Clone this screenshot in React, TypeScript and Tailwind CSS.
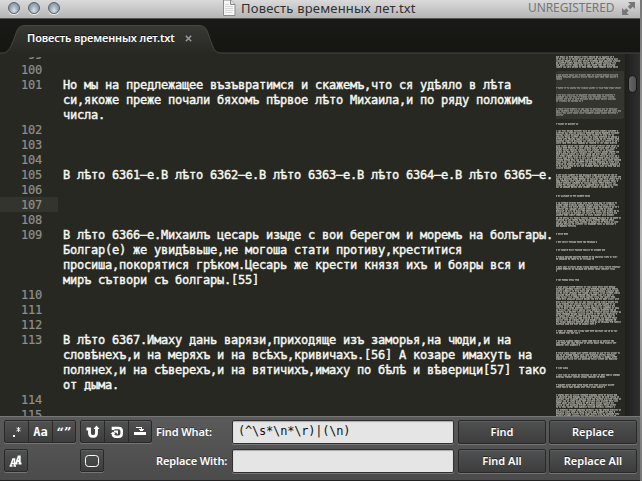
import React from "react";

type Line = { n: number; rows: string[] };

const lines: Line[] = [
  { n: 99, rows: [""] },
  { n: 100, rows: [""] },
  {
    n: 101,
    rows: [
      "Но мы на предлежащее възъвратимся и скажемъ,что ся удѣяло в лѣта",
      "си,якоже преже почали бяхомъ пѣрвое лѣто Михаила,и по ряду положимъ",
      "числа.",
    ],
  },
  { n: 102, rows: [""] },
  { n: 103, rows: [""] },
  { n: 104, rows: [""] },
  { n: 105, rows: ["В лѣто 6361–е.В лѣто 6362–е.В лѣто 6363–е.В лѣто 6364–е.В лѣто 6365–е."] },
  { n: 106, rows: [""] },
  { n: 107, rows: [""] },
  { n: 108, rows: [""] },
  {
    n: 109,
    rows: [
      "В лѣто 6366–е.Михаилъ цесарь изыде с вои берегом и моремъ на болъгары.",
      "Болгар(е) же увидѣвьше,не могоша стати противу,креститися",
      "просиша,покорятися грѣком.Цесарь же крести князя ихъ и бояры вся и",
      "миръ сътвори съ болгары.[55]",
    ],
  },
  { n: 110, rows: [""] },
  { n: 111, rows: [""] },
  { n: 112, rows: [""] },
  {
    n: 113,
    rows: [
      "В лѣто 6367.Имаху дань варязи,приходяще изъ заморья,на чюди,и на",
      "словѣнехъ,и на меряхъ и на всѣхъ,кривичахъ.[56] А козаре имахуть на",
      "полянех,и на сѣверехъ,и на вятичихъ,имаху по бѣлѣ и вѣверици[57] тако",
      "от дыма.",
    ],
  },
  { n: 114, rows: [""] },
  { n: 115, rows: [""] },
];

// Minimap paragraphs: top offset, row count, width of the last row
const blocks: [number, number, number][] = [
  [2, 6, 62], [20, 3, 6], [33, 1, 65], [40, 4, 27], [54, 4, 8], [69, 1, 23],
  [76, 19, 15], [120, 7, 58], [141, 1, 34], [148, 12, 20], [179, 1, 12],
  [187, 1, 41], [195, 1, 49], [202, 2, 38], [212, 3, 1], [225, 1, 23],
  [232, 19, 40], [276, 2, 24], [286, 3, 24], [298, 4, 62], [313, 1, 12],
  [320, 2, 49], [330, 2, 49], [340, 11, 60],
];

function Minimap() {
  let seed = 17;
  const rnd = () => {
    seed = (seed * 16807) % 2147483647;
    return seed / 2147483647;
  };
  const marks: React.ReactNode[] = [];
  blocks.forEach(([top, count, last], b) => {
    for (let i = 0; i < count; i++) {
      const y = top + Math.round(i * 2.08);
      const inView = y > 18 && y < 66;
      const width = i === count - 1 ? last : 58 + Math.floor(rnd() * 8);
      let gap = i === 0 && b > 0 ? 1 : -1;
      for (let x = 0; x < width; x++) {
        if (x === gap) {
          gap = x + 3 + Math.floor(rnd() * 7);
          marks.push(<rect key={`${b}-${i}-${x}`} x={x} y={y} width={1} height={1} opacity={0.25} />);
          continue;
        }
        if (gap < x) gap = x + 2 + Math.floor(rnd() * 7);
        const upper = 0.5 + rnd() * 0.35;
        const lower = 0.4 + rnd() * 0.35;
        const k = inView ? 0.75 : 1;
        marks.push(
          <rect key={`${b}-${i}-${x}`} x={x} y={y} width={1} height={1} opacity={upper * k} />,
          <rect key={`${b}-${i}-${x}b`} x={x} y={y + 1} width={1} height={1} opacity={lower * k} />,
        );
      }
    }
  });
  return (
    <svg width="69" height="362" className="block shrink-0" shapeRendering="crispEdges">
      <rect x="0" y="17" width="68" height="48" rx="2" fill="#34352f" />
      <g fill="#b0b0a8">{marks}</g>
    </svg>
  );
}

const raised =
  "border border-[#292929] bg-linear-to-b from-[#505152] to-[#3d3d3d] shadow-[0_1px_0_#747474,inset_0_1px_0_#5c5d5e]";

function Tool({ children }: { children: React.ReactNode }) {
  return (
    <span className="flex h-full w-6 items-center justify-center border-r border-[#292929] last:w-[22px] last:border-r-0">
      {children}
    </span>
  );
}

function ToolGroup({ children }: { children: React.ReactNode }) {
  return <div className={`flex h-[23px] w-fit rounded-[2px] ${raised}`}>{children}</div>;
}

function PushButton({ children }: { children: React.ReactNode }) {
  return (
    <button
      className={`h-6 w-[88px] rounded-[2px] text-center text-[11px] font-semibold text-white [text-shadow:0_-1px_0_#222] ${raised}`}
    >
      {children}
    </button>
  );
}

function Field({ value }: { value: string }) {
  return (
    <input
      readOnly
      value={value}
      className="h-6 w-[222px] rounded-[2px] border border-[#303030] bg-[#e5e5e5] px-[5px] pb-[3px] font-['DejaVu_Sans_Mono',monospace] text-[12px] tracking-[-0.2px] text-[#111] shadow-[0_1px_0_#777,inset_0_1px_1px_#aaa] outline-none"
    />
  );
}

function Light() {
  return (
    <span className="size-3 rounded-full border border-[#59636c] bg-radial-[at_50%_75%] from-[#d5e3ec] via-[#9eacb7] to-[#6f7d88] shadow-[0_1px_0_#eee]" />
  );
}

export default function App() {
  return (
    <div className="flex h-[481px] w-[642px] overflow-hidden bg-[#a6a6a6] font-['Noto_Sans','Open_Sans',sans-serif]">
      <div className="flex w-[640px] shrink-0 flex-col bg-[#272822]">
        <header className="flex h-[19px] shrink-0 items-center border-b border-[#555] bg-linear-to-b from-[#dadada] to-[#b5b5b5] pb-[3px]">
          <div className="flex w-[223px] shrink-0 gap-2 pl-2">
            <Light />
            <Light />
            <Light />
          </div>
          <svg width="13" height="16" viewBox="0 0 13 16" className="shrink-0">
            <path d="M.5 0V15.5H12V4.5L7.5 0Z" fill="#f7f7f7" stroke="#8a8a8a" />
            <path d="M7.5 0V4.5H12" fill="#ddd" stroke="#888" />
            <path d="M2 4.5H6M2 6.5H10M2 8.5H10M2 10.5H10M2 12.5H9" stroke="#d6d6d6" />
          </svg>
          <h1 className="w-[292px] shrink-0 pl-[5px] text-[13px] leading-4 tracking-[0.19px] whitespace-nowrap text-[#303030]">
            Повесть временных лет.txt
          </h1>
          <span className="w-[93px] shrink-0 text-[12px] leading-4 tracking-[-0.1px] text-[#767676]">UNREGISTERED</span>
          <svg width="15" height="15" viewBox="0 0 15 15" className="mt-[2px] shrink-0" fill="#777">
            <path d="M7 1H14V8L11.8 5.8L9.300 8.200L6.800 5.700L9.300 3.200Z" />
            <path d="M8 14H1V7L3.200 9.200L5.200 7.300L7.700 9.800L5.700 11.800Z" />
          </svg>
        </header>

        <nav className="grid h-[35px] shrink-0 bg-linear-to-b from-[#191a16] to-[#151612]">
          <svg width="640" height="35" className="col-start-1 row-start-1">
            <defs>
              <linearGradient id="tabFill" x1="0" y1="0" x2="0" y2="1">
                <stop offset="0" stopColor="#383934" />
                <stop offset="1" stopColor="#272822" />
              </linearGradient>
            </defs>
            <path
              d="M0 34H2C9 34 11 27 14 20C17 12 17 6.500 25 6.500H199C207 6.500 207 12 210 20C213 28 214 34 221 34H640V35H0Z"
              fill="url(#tabFill)"
            />
            <path
              d="M0 34H2C9 34 11 27 14 20C17 12 17 6.500 25 6.500H199C207 6.500 207 12 210 20C213 28 214 34 221 34H640"
              fill="none"
              stroke="#464740"
            />
          </svg>
          <div className="col-start-1 row-start-1 flex items-center gap-[10px] pt-[4px] pl-[27px] text-[11px] font-semibold text-white [text-shadow:0_-1px_0_#111]">
            <span className="tracking-[-0.12px] whitespace-nowrap">Повесть временных лет.txt</span>
            <svg width="7" height="7" viewBox="0 0 7 7" stroke="#999a95" strokeWidth="1.500">
              <path d="M.8.8L6.200 6.200M6.200.8L.8 6.200" />
            </svg>
          </div>
        </nav>

        <main className="flex h-[362px] shrink-0 overflow-hidden">
          <div className="mt-[3px] w-[556px] shrink-0 overflow-hidden font-['DejaVu_Sans_Mono',monospace] text-[12px] leading-[17px] tracking-[-0.224px]">
            <div className="-mt-[10px]">
              {lines.map(({ n, rows }) => (
                <div key={n} className="flex">
                  <div
                    className={`h-[15px] w-[58px] shrink-0 pr-4 text-right text-[#8f908a] [-webkit-text-stroke:0.2px_#8f908a] ${n === 107 ? "bg-[#33342d]" : ""}`}
                  >
                    {n}
                  </div>
                  <div className="pl-[5px] whitespace-pre text-[#f8f8f2] [-webkit-text-stroke:0.4px_#f8f8f2]">
                    {rows.map((row, i) => (
                      <div key={i} className="h-[15px]">
                        {row}
                      </div>
                    ))}
                  </div>
                </div>
              ))}
            </div>
          </div>
          <Minimap />
          <div className="flex w-[15px] shrink-0 justify-center bg-linear-to-r from-[#1e1e1e] to-[#303030] pt-[21px]">
            <div className="h-[18px] w-[9px] rounded-full border border-[#171717] bg-linear-to-r from-[#666] to-[#505050]" />
          </div>
        </main>

        <footer className="flex h-[65px] shrink-0 border-t border-b border-t-[#777] border-b-[#222] bg-linear-to-b from-[#5a5a5a] to-[#4b4b4b] pt-[3px] pl-1">
          <div className="mr-1 flex w-[72px] flex-col gap-[6px]">
            <ToolGroup>
              <Tool>
                <svg width="12" height="14" fill="white" stroke="white">
                  <path d="M2 10H4V12H2Z" stroke="none" />
                  <path d="M7.500 2V7M5.500 3L9.500 6M9.500 3L5.500 6" strokeWidth=".9" />
                </svg>
              </Tool>
              <Tool>
                <span className="font-['DejaVu_Sans_Mono',monospace] text-[12px] leading-3 font-bold text-white">Aa</span>
              </Tool>
              <Tool>
                <span className="pt-[3px] font-['DejaVu_Serif',serif] text-[13px] leading-3 font-bold text-white">“”</span>
              </Tool>
            </ToolGroup>
            <ToolGroup>
              <Tool>
                <svg width="14" height="14" fill="none" stroke="white">
                  <path d="M1.500 12L4 5H5.500V12M3 9.500H6M.5 12H3.500M4.500 12H7" strokeWidth="1.600" />
                  <path d="M7 9.500L9.500 2.500H10.800V9.500M8.500 7H11.500M6 9.500H8.500M9.500 9.500H12.500" strokeWidth="1.800" />
                </svg>
              </Tool>
            </ToolGroup>
          </div>
          <div className="mr-1 flex w-[72px] flex-col gap-[6px]">
            <ToolGroup>
              <Tool>
                <svg width="14" height="14" fill="none" stroke="white">
                  <path d="M.5 4H3.500V8Q3.500 11.300 6.500 11.300H7.500Q10.500 11.300 10.500 8V3" strokeWidth="2.800" />
                  <path d="M7.500 4L10.500 .5L13.500 4Z" fill="white" stroke="none" />
                </svg>
              </Tool>
              <Tool>
                <svg width="14" height="14" fill="none" stroke="white">
                  <path d="M3 5V3H8.500Q11.700 3 11.700 6V8.500Q11.700 11.700 8.500 11.700H6Q3 11.700 3 9" strokeWidth="2.600" />
                  <path d="M4 5.500H8V9.500L6 7.500H4Z" fill="white" stroke="none" />
                  <path d="M.5 9L3 6.500L5.500 9Z" fill="white" stroke="none" />
                </svg>
              </Tool>
              <Tool>
                <svg width="14" height="12" shapeRendering="crispEdges">
                  <path d="M1 6H13V9H1Z" fill="white" />
                  <path d="M3 1.500H8V5M6 3.500H11M7 4.500H10" fill="none" stroke="white" />
                </svg>
              </Tool>
            </ToolGroup>
            <ToolGroup>
              <Tool>
                <svg width="14" height="12">
                  <rect x=".5" y=".5" width="13" height="11" rx="3" fill="none" stroke="white" />
                </svg>
              </Tool>
            </ToolGroup>
          </div>
          <div className="flex w-[76px] flex-col gap-[5px] text-[11px] leading-6 font-semibold tracking-[-0.13px] whitespace-nowrap text-white [text-shadow:0_-1px_0_#333]">
            <label>Find What:</label>
            <label>Replace With:</label>
          </div>
          <div className="mr-1 flex flex-col gap-[5px]">
            <Field value="(^\s*\n*\r)|(\n)" />
            <Field value="" />
          </div>
          <div className="grid grid-cols-[88px_88px] content-start gap-x-[3px] gap-y-[5px]">
            <PushButton>Find</PushButton>
            <PushButton>Replace</PushButton>
            <PushButton>Find All</PushButton>
            <PushButton>Replace All</PushButton>
          </div>
        </footer>
      </div>
      <aside className="w-[2px] bg-linear-to-b from-[#777] via-[#b5b5b5] to-[#777]" />
    </div>
  );
}
